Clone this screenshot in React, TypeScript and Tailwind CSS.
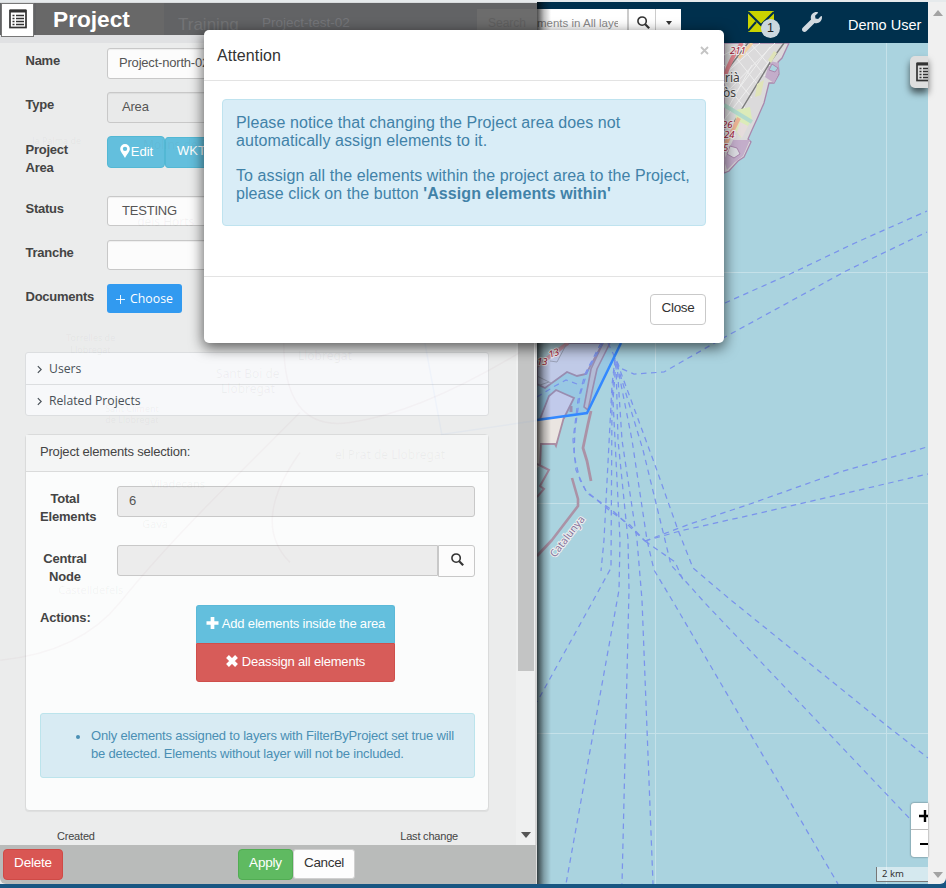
import React from 'react';

const ferries = [
  'M615 358 L612 385 L604 540 L601 571',
  'M615 360 L612 400 L611 568 L588 610 L537 702',
  'M616 362 L613 400 L620 540 L619 590 L566 884',
  'M616 364 L618 440 L628 540 L629 590 L622 884',
  'M617 362 L622 440 L637 540 L642 600 L653 884',
  'M617 364 L632 440 L647 540 L654 570 L675 605 L838 884',
  'M617 364 L643 450 L665 540 L671 565 L705 603 L911 820',
  'M617 362 L655 465 L678 530 L693 568 L732 601 L886 725 L928 758',
  'M608 343 L620 368 L634 374 L664 372 L725 337 L846 271 L927 232',
  'M725 303 L790 274 L855 243 L927 211',
  'M645 541 L690 524 L750 504 L840 472 L927 447',
  'M645 541 L680 531 L760 513 L928 474',
  'M645 541 L675 562 L683 580',
  'M537 397 L555 386 L566 380 L577 384',
  'M603 343 L588 370 L580 395 L575 430 L574 455 L580 480 L587 493 L612 510 L645 541',
  'M601 343 L585 374 L578 400 L573 440 L576 470 L586 491 L609 510 L630 525 L645 541',
];

function ListIcon({ className }: { className: string }) {
  return (
    <svg viewBox="0 0 18 20" className={className} fill="none">
      <rect x="1" y="1.5" width="16" height="17" stroke="#333" strokeWidth="1.7" />
      <path d="M1 2h16" stroke="#333" strokeWidth="3" />
      <path d="M3.5 6.5h2M3.5 9.5h2M3.5 12.5h2M3.5 15.5h2M7 6.5h8M7 9.5h8M7 12.5h8M7 15.5h8" stroke="#333" strokeWidth="1.5" />
    </svg>
  );
}

function SeaMap() {
  return (
    <svg viewBox="537 43 391 841" className="block h-[841px] w-[391px]">
      <rect x="537" y="43" width="391" height="841" fill="#aad3df" />
      <path d="M655.500 43V884M886.500 43V884M537 272.500H928M537 503.500H928M537 733.500H928" stroke="#c5e1e9" strokeWidth="1" />
      {/* Besòs shoreline */}
      <path d="M724 43H789L782 58L778 62L779 74L774 83L769 83L764 103L757 119L752 130L748 139L751 142L744 157L738 161L729 171L724 173Z" fill="#dbdadb" stroke="#a987ac" strokeWidth="1.300" />
      <path d="M770 61l9 2-1 12-4 8-9-6zM733 140l17 0-7 16-8 6-8 8-3-10z" fill="#c3adca" />
      <path d="M772 64l6 4-3 4-6-2z" fill="#aad3df" stroke="#a987ac" />
      <path d="M730 146l7 2 3 6-6 4-7-4z" fill="#dcdce2" stroke="#a987ac" />
      <path d="M724 55L745 43M724 75L760 43M724 95L775 43M724 120L770 60M730 50L758 85M740 45L765 76M751 44L770 66M724 82L748 112M724 65L752 98M737 91L770 47M728 108L752 65" stroke="#eeeeee" strokeWidth="1" fill="none" />
      <path d="M724 74L748 43M734 122L771 61L784 43" stroke="#7b7b7b" strokeWidth="1.400" fill="none" />
      <path d="M725 76C730 60 735 52 742 43" stroke="#e0858f" strokeWidth="4" fill="none" />
      <path d="M739 58L752 43" stroke="#f3cfa0" strokeWidth="3" />
      <path d="M736 110L750 107 752 119 741 138 735 130z" fill="#dcebb9" />
      <path d="M740 122l8 4-6 12-5-6z" fill="#e5dcdc" />
      <path d="M757 84L764 80 761 95 755 97zM768 60l6-9 3 2-6 10z" fill="#dfe3b8" />
      <path d="M724 105L752 122" stroke="#b3dbcd" strokeWidth="4" />
      <path d="M725 145L739 118" stroke="#edb495" strokeWidth="4" />
      {/* Port basin */}
      <path d="M537 343H603L586 374L577 376L567 372L545 388L537 384Z" fill="#d8d5e4" stroke="#aa8ea4" strokeWidth="1.800" />
      <path d="M537 343H565L553 356L537 360Z" fill="#bdd1c8" />
      <path d="M537 366L568 343" stroke="#e09a99" strokeWidth="4" />
      <path d="M550 361l7 1 9-17M537 376l14 7M537 386l12-4" stroke="#aaa5aa" strokeWidth="1" fill="none" />
      <path d="M540 419L549 396L556 390L565 394L574 398L564 418Z" fill="#d9d5e8" stroke="#aa8ea4" strokeWidth="1.800" />
      <path d="M571 406v6" stroke="#aa8ea4" strokeWidth="3" />
      <path d="M537 420L564 417L556 446L555 444L541 444L540 466L537 468Z" fill="#eae5e1" />
      <path d="M564 417L556 446L555 444L541 444L540 466" fill="none" stroke="#aa8ea4" strokeWidth="1.800" />
      <path d="M537 464L549 470L540 486L544 489L537 497" fill="none" stroke="#aa8ea4" strokeWidth="2" />
      <path d="M603 343L591 369L584 407L588 410L597 369L610 343" fill="#c9c5d0" stroke="#aa8ea4" strokeWidth="1.600" />
      <path d="M591 411L588 424L583 448L587 461L591 481" fill="none" stroke="#ab92a6" strokeWidth="2.800" strokeLinejoin="round" />
      <path d="M572 478L578 499V506L552 540L537 556" fill="none" stroke="#ab92a6" strokeWidth="2.600" strokeLinejoin="round" />
      <path d="M537 343H621L587 413L537 420Z" fill="#3388ff" fillOpacity=".14" />
      {ferries.map((d, i) => (
        <path key={i} d={d} fill="none" stroke="#7a93ec" strokeWidth="1.250" strokeDasharray="5.500 4.500" />
      ))}
      <path d="M621 343L587 413L537 420" fill="none" stroke="#3388ff" strokeWidth="2.500" />
      <g fontFamily="Noto Sans, sans-serif" fontSize="12" fill="#444" stroke="#eee" strokeWidth="2" paintOrder="stroke">
        <text x="725" y="82">rià</text>
        <text x="723" y="97">òs</text>
        <g fontSize="9.500" fill="#a51636" fontStyle="italic">
          <text x="730" y="54">211</text>
          <text x="722" y="128">26</text>
          <text x="724" y="138">24</text>
          <text x="723" y="151">5</text>
          <text x="537" y="365">13</text>
          <text x="550" y="358" transform="rotate(-20 550 358)">13</text>
        </g>
        <text x="555" y="558" fontSize="10.500" fill="#84749c" transform="rotate(-52 555 558)">Catalunya</text>
      </g>
    </svg>
  );
}

function GhostMap() {
  return (
    <svg viewBox="0 0 537 882" className="pointer-events-none absolute inset-0 h-full w-full" aria-hidden="true">
      <g fontFamily="Noto Sans, sans-serif" fontSize="12" fill="#555" fillOpacity=".06">
        <text x="32" y="141" fontSize="9">la Palma de</text>
        <text x="143" y="146">Molins de Rei</text>
        <text x="137" y="223">dels Horts</text>
        <text x="66" y="338" fontSize="9">Torrelles de</text>
        <text x="70" y="350" fontSize="9">Llobregat</text>
        <text x="216" y="375">Sant Boi de</text>
        <text x="221" y="390">Llobregat</text>
        <text x="105" y="409" fontSize="9">Sant Climent</text>
        <text x="105" y="420" fontSize="9">de Llobregat</text>
        <text x="298" y="357">Llobregat</text>
        <text x="335" y="457">el Prat de Llobregat</text>
        <text x="150" y="486" fontSize="11">Viladecans</text>
        <text x="142" y="526" fontSize="11">Gavà</text>
        <text x="58" y="592" fontSize="11">Castelldefels</text>
      </g>
      <g fill="none" stroke="#a35560" strokeOpacity=".04" strokeWidth="1.500">
        <path d="M0 658Q80 650 120 600T230 480T300 410M284 330Q280 430 350 420T520 350M290 560Q250 520 300 450" />
        <path d="M425 340L442 432L537 418" stroke="#3388ff" />
      </g>
    </svg>
  );
}

const label = 'w-[82px] shrink-0 pt-[4px] pl-[0.5px] text-[13px] leading-[18px] font-bold tracking-[-0.25px] text-[#444]';
const field = 'w-[382px] rounded-[3px] border border-[#c8c8c8] px-[11px] text-[13px] leading-[28px] tracking-[-0.2px] text-[#555] shadow-[inset_0_1px_1px_rgba(0,0,0,.06)]';

function Row({ name, className, children }: { name: React.ReactNode; className: string; children: React.ReactNode }) {
  return (
    <div className={'flex items-start ' + className}>
      <div className={label}>{name}</div>
      {children}
    </div>
  );
}

function Chevron() {
  return (
    <svg viewBox="0 0 6 10" className="mr-[7px] h-[9px] w-[5px]" fill="none" stroke="#495057" strokeWidth="1.400">
      <path d="M1 1l4 4-4 4" />
    </svg>
  );
}

function MagnifierIcon() {
  return (
    <svg viewBox="0 0 14 14" className="h-[13px] w-[13px]" fill="none" stroke="#333">
      <circle cx="5.500" cy="5.500" r="4.500" strokeWidth="1.700" />
      <path d="M8.800 8.800l4.300 4.300" strokeWidth="2.300" />
    </svg>
  );
}

function PlusIcon() {
  return <svg viewBox="0 0 13 13" className="-mt-[2px] h-[12px] w-[13px] fill-white"><path d="M4.500 0h4v4.500H13v4H8.500V13h-4V8.500H0v-4h4.500z" /></svg>;
}

function CrossIcon() {
  return <svg viewBox="0 0 12 12" className="-mt-[2px] h-[12px] w-[12px]" stroke="white" strokeWidth="4"><path d="M1.500 1.500l9 9M10.500 1.500l-9 9" /></svg>;
}

function SidePanel() {
  return (
    <aside className="relative flex h-[882px] w-[537px] shrink-0 flex-col overflow-hidden border-t border-[#d9dcde] bg-[#ebecec]">
      <header className="relative flex h-[32px] shrink-0 items-center bg-[#626365] pl-[53px]">
        <div className="absolute top-0 left-[36px] h-[32px] w-[128px] bg-[#686868]" />
        <div className="absolute top-[6px] right-0 h-[26px] w-[60px] bg-[#6c6c6c]" />
        <span className="absolute top-[10px] left-[178px] text-[17px] leading-[24px] text-[#737476]">Training</span>
        <span className="absolute top-[12px] left-[262px] text-[13.500px] leading-[16px] text-[#75767a]">Project-test-02</span>
        <span className="absolute top-[12px] left-[488px] text-[12px] leading-[16px] whitespace-nowrap text-[#606060]">Search</span>
        <h1 className="relative text-[22.700px] leading-[30px] font-bold text-white">Project</h1>
      </header>
      <div className="h-[8px] shrink-0 bg-[#e0e1e3]" />
      <div className="flex h-[802px]">
        <div className="flex w-[516px] shrink-0 flex-col pl-[25px]">
          <Row name="Name" className="mt-[5px] h-[44px]">
            <div className={field + ' h-[31px] bg-[#fcfcfc]'}>Project-north-02</div>
          </Row>
          <Row name="Type" className="h-[44px]">
            <div className={field + ' h-[31px] bg-[#e9eaea] pl-[14px] text-[#8a8a8a]'}>Area</div>
          </Row>
          <Row name={<div className="pt-px">Project<br />Area</div>} className="h-[60px]">
            <div className="flex items-end text-white">
              <div className="flex h-[32px] w-[58px] items-center justify-center rounded-[4px] border border-[#53b8d4] bg-[#63bfdd]">
                <svg viewBox="0 0 12 16" className="-mt-[3px] h-[14px] w-[12px] fill-white">
                  <path fillRule="evenodd" d="M6 0a5.500 5.500 0 0 1 5.500 5.500C11.500 9 8 12 6 16 4 12 .5 9 .5 5.500A5.500 5.500 0 0 1 6 0zm0 3a2.500 2.500 0 1 0 0 5 2.500 2.500 0 0 0 0-5z" />
                </svg>
                <span className="text-[13px]">Edit</span>
              </div>
              <div className="h-[31px] w-[60px] rounded-[3px] border border-[#53b8d4] bg-[#63bfdd] pl-[11px] text-[13px] leading-[26px]">WKT</div>
            </div>
          </Row>
          <Row name="Status" className="h-[44px]">
            <div className={field + ' h-[30px] bg-[#fcfcfc] pl-[14px]'}>TESTING</div>
          </Row>
          <Row name="Tranche" className="h-[44px]">
            <div className={field + ' h-[30px] bg-[#fcfcfc]'} />
          </Row>
          <Row name="Documents" className="h-[68px]">
            <div className="flex h-[29px] w-[75px] items-center justify-center gap-[5px] rounded-[3px] bg-[#319af0] pt-px font-['Open_Sans',sans-serif] text-[12.300px] text-white">
              <svg viewBox="0 0 10 10" className="h-[9px] w-[9px]" stroke="white"><path d="M5 0v10M0 5h10" /></svg>
              Choose
            </div>
          </Row>

          <div className="h-[64px] w-[464px] shrink-0 rounded-[3px] border border-[#dcdee0] bg-[#f7f8fa] font-['Open_Sans',sans-serif] text-[12.200px] text-[#495057]">
            <div className="flex h-[32px] items-center border-b border-[#dcdee0] pt-[2px] pl-[11px]"><Chevron />Users</div>
            <div className="flex h-[30px] items-center pt-[2px] pl-[11px]"><Chevron />Related Projects</div>
          </div>

          <section className="mt-[18px] h-[377px] w-[464px] shrink-0 rounded-[4px] border border-[#dadbdb] bg-[#fbfcfc] shadow-[0_1px_1px_rgba(0,0,0,.06)]">
            <h2 className="h-[37px] border-b border-[#dadbdb] bg-[#f4f5f5] pl-[14px] text-[13px] leading-[34px] tracking-[-0.19px] text-[#444]">Project elements selection:</h2>
            <div className="pl-[14px] text-[13px] tracking-[-0.18px]">
              <div className="mt-[14px] flex h-[59px]">
                <div className="mr-[27px] w-[50px] pt-[4px] text-center leading-[18px] font-bold text-[#444]">Total Elements</div>
                <div className="h-[31px] w-[358px] rounded-[3px] border border-[#c8c8c8] bg-[#ececec] pl-[11px] leading-[27px] text-[#555]">6</div>
              </div>
              <div className="flex h-[60px]">
                <div className="mr-[27px] w-[50px] pt-[5px] text-center leading-[18px] font-bold text-[#444]">Central Node</div>
                <div className="h-[31px] w-[321px] rounded-l-[3px] border border-[#c8c8c8] bg-[#ececec]" />
                <div className="flex h-[32px] w-[37px] items-center justify-center rounded-r-[3px] border border-[#c8c8c8] bg-[#fcfcfc] pb-[3px] pl-px">
                  <MagnifierIcon />
                </div>
              </div>
              <div className="flex h-[108px]">
                <div className="w-[156px] pt-[4px] leading-[18px] font-bold text-[#444]">Actions:</div>
                <div className="h-[77px] w-[199px] text-white">
                  <div className="flex h-[38px] items-center justify-center gap-[3px] rounded-t-[3px] border border-b-0 border-[#5bb9d8] bg-[#63bfdd] pb-px">
                    <PlusIcon />Add elements inside the area
                  </div>
                  <div className="flex h-[39px] items-center justify-center gap-[4px] rounded-b-[3px] border border-[#cf4f4b] bg-[#d75c59] pb-[2px]">
                    <CrossIcon />Deassign all elements
                  </div>
                </div>
              </div>
              <div className="flex h-[65px] w-[435px] rounded-[3px] border border-[#bce4ec] bg-[#d8ebf3] pt-[13px] pl-[35px] leading-[18px] text-[#4a8fb4]">
                <span className="mt-[8px] mr-[11px] h-[4px] w-[4px] shrink-0 rounded-full bg-[#4a8fb4]" />
                <p className="whitespace-nowrap">Only elements assigned to layers with FilterByProject set true will<br />be detected. Elements without layer will not be included.</p>
              </div>
            </div>
          </section>
          <div className="mt-[18px] flex justify-between pr-[58px] pl-[32px] text-[11px] leading-[14px] tracking-[-0.2px] text-[#444]">
            <span>Created</span>
            <span>Last change</span>
          </div>
        </div>
        <div className="flex w-[19px] flex-col justify-between bg-[#eff0f0] pl-[2px]">
          <div className="h-[628px] w-[16px] bg-[#c3c4c4]" />
          <div className="mb-[7px] ml-[3px] h-0 w-0 border-x-[5.500px] border-t-[6px] border-x-transparent border-t-[#555]" />
        </div>
        <div className="w-[2px] bg-[#d5d5d5]" />
      </div>
      <footer className="flex h-[39px] shrink-0 items-start rounded-bl-[6px] border-r border-[#ddd] bg-[#b9bbba] pt-[4px] pl-[3px] text-[13.500px] tracking-[-0.2px]">
        <div className="h-[31px] w-[60px] rounded-[4px] border border-[#cf4a46] bg-[#d95653] text-center leading-[26px] text-white">Delete</div>
        <div className="ml-[175px] h-[31px] w-[55px] rounded-[4px] border border-[#51ad53] bg-[#5fba61] text-center leading-[26px] text-white">Apply</div>
        <div className="h-[30px] w-[62px] rounded-[3px] border border-[#d0d0d0] bg-[#fdfdfd] text-center leading-[25px] tracking-[-0.35px] text-[#333]">Cancel</div>
      </footer>
      <GhostMap />
      <div className="absolute top-0 left-px flex h-[34px] w-[33px] items-center justify-center border border-[#777] bg-white pb-[2px]">
        <ListIcon className="h-[20px] w-[18px]" />
      </div>
    </aside>
  );
}

function Navbar() {
  return (
    <nav className="flex h-[41px] w-[391px] bg-[#00304d] pt-[7px]">
      <div className="flex h-[28px] w-[144px] shrink-0 bg-white text-[11.500px] leading-[28px] text-[#8a8a8a]">
        <div className="w-[92px] overflow-hidden border-r-2 border-[#ccc] pr-[9px]">
          <div className="overflow-hidden whitespace-nowrap">ments in All layers</div>
        </div>
        <div className="flex w-[27px] items-center justify-center border-r border-[#ccc] pb-[2px] pl-[2px]"><MagnifierIcon /></div>
        <div className="flex flex-1 items-center justify-center"><i className="h-0 w-0 border-x-[3.500px] border-t-[4px] border-x-transparent border-t-[#333]" /></div>
      </div>
      <div className="relative ml-[67px] h-[30px] w-[33px]">
        <svg viewBox="0 0 26 21" className="mt-[2px] h-[21px] w-[26px]">
          <path d="M0 0h26v21H0z" fill="#cad400" />
          <path d="M0 1l13 13L26 1M0 20l8-9M26 20l-8-9" fill="none" stroke="#00304d" strokeWidth="2" />
        </svg>
        <span className="absolute top-[10px] left-[13px] flex h-[19px] w-[19px] items-center justify-center rounded-full bg-[#ccd7df] text-[12.500px] text-[#222]">1</span>
      </div>
      <svg viewBox="0 0 512 512" className="mt-[3px] ml-[21px] h-[20px] w-[20px] shrink-0 fill-[#d2dae0]">
        <path d="M507.730 109.100c-2.240-9.030-13.540-12.090-20.120-5.510l-74.360 74.360-67.880-11.310-11.310-67.880 74.360-74.360c6.620-6.620 3.430-17.900-5.660-20.160-47.380-11.740-99.550.91-136.580 37.930-39.640 39.640-50.550 97.100-34.050 147.200L18.740 402.760c-24.990 24.990-24.990 65.510 0 90.500 24.990 24.990 65.510 24.990 90.500 0l213.210-213.210c50.120 16.710 107.470 5.680 147.370-34.220 37.070-37.070 49.700-89.320 37.910-136.730z" />
      </svg>
      <div className="ml-[26px] pt-[5px] text-[14.500px] leading-[22px] whitespace-nowrap text-white">Demo User</div>
    </nav>
  );
}

function AttentionDialog() {
  return (
    <div role="dialog" className="absolute top-[30px] left-[204px] flex h-[313px] w-[520px] flex-col rounded-[5px] bg-white shadow-[0_4px_14px_1px_rgba(0,0,0,.6)]">
      <div className="flex h-[51px] justify-between border-b border-[#e3e3e3] pt-[14px] pr-[15px] pl-[13px]">
        <h2 className="text-[16px] leading-[24px] tracking-[0.1px] text-[#333]">Attention</h2>
        <svg viewBox="0 0 9 9" className="mt-[2px] h-[9px] w-[9px]" stroke="#c4c4c4" strokeWidth="1.800"><path d="M1 1l7 7M8 1l-7 7" /></svg>
      </div>
      <div className="h-[195px] px-[18px] pt-[18px]">
        <div className="h-[127px] rounded-[4px] border border-[#bfe3ef] bg-[#d9edf7] px-[13px] pt-[14px] text-[16px] leading-[17.600px] tracking-[0.085px] whitespace-nowrap text-[#4182a8]">
          <p>Please notice that changing the Project area does not<br />automatically assign elements to it.</p>
          <p className="mt-[18px]">To assign all the elements within the project area to the Project,<br />please click on the button <b>'Assign elements within'</b></p>
        </div>
      </div>
      <div className="flex flex-1 justify-end border-t border-[#e3e3e3] pt-[17px] pr-[18px]">
        <button className="h-[31px] w-[56px] rounded-[4px] border border-[#c9c9c9] bg-white pb-[3px] text-[13.500px] leading-[26px] tracking-[-0.3px] text-[#333]">Close</button>
      </div>
    </div>
  );
}

export default function App() {
  return (
    <div className="relative flex h-[888px] w-[946px] flex-col overflow-hidden bg-[#185682] font-['Liberation_Sans',Arial,sans-serif]">
      <div className="h-[2px] shrink-0 bg-[#e6eaec]" />
      <div className="flex h-[882px]">
        <SidePanel />
        <div className="relative flex h-[882px] w-[391px] flex-col">
          <Navbar />
          <SeaMap />
          <div className="pointer-events-none absolute inset-y-0 left-0 w-[14px] bg-linear-to-r from-black/70 via-black/25 to-transparent" />
          <div className="absolute top-[54px] right-0 flex h-[32px] w-[18px] items-center overflow-hidden rounded-l-[5px] bg-[#dedede] pl-[6px] shadow-[0_5px_7px_rgba(0,0,0,.6)]">
            <ListIcon className="h-[20px] w-[18px] shrink-0" />
          </div>
          <div className="absolute right-0 bottom-[27px] h-[54px] w-[17px] overflow-hidden rounded-l-[3px] bg-white shadow-[0_0_2px_rgba(0,0,0,.6)]">
            <div className="flex h-[27px] items-center border-b border-[#bbb] pl-[8px]">
              <svg viewBox="0 0 12 12" className="h-[12px] w-[12px] shrink-0" stroke="black" strokeWidth="2.400"><path d="M6 0v12M0 6h12" /></svg>
            </div>
            <div className="flex h-[28px] items-center pl-[9px]"><i className="h-[2px] w-[12px] shrink-0 bg-black" /></div>
          </div>
          <div className="absolute right-0 bottom-[2px] h-[15px] w-[52px] border-b border-l border-[#777] bg-white/50 pl-[5px] font-['Noto_Sans',sans-serif] text-[9.500px] leading-[14px] text-[#333]">2 km</div>
        </div>
        <div className="flex w-[18px] flex-col items-center justify-between rounded-br-[6px] bg-[#f0f0f0] pt-[8px] pb-[6px] pl-[2px]">
          <i className="h-0 w-0 border-x-[5px] border-b-[6px] border-x-transparent border-b-[#a3a3a3]" />
          <i className="h-0 w-0 border-x-[5px] border-t-[6px] border-x-transparent border-t-[#a3a3a3]" />
        </div>
      </div>
      <AttentionDialog />
    </div>
  );
}
